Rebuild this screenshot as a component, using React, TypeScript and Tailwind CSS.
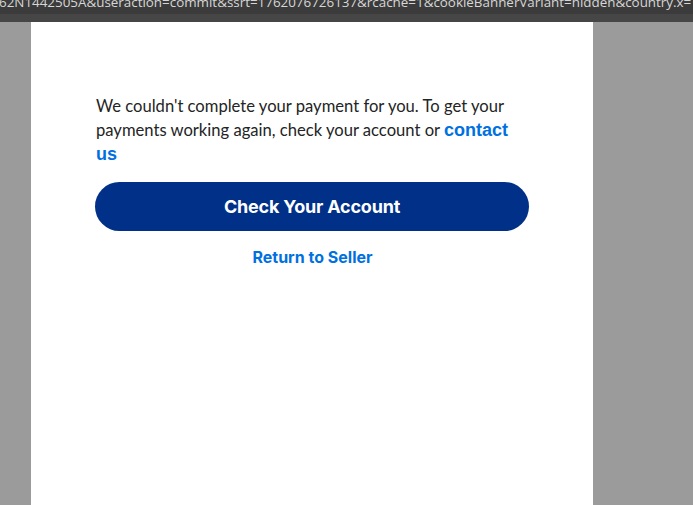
export default function App() {
  return (
    <div className="flex h-[505px] w-[693px] flex-col overflow-hidden bg-[#9b9b9b]">
      {/* browser url strip, clipped at the top */}
      <div className="h-[14px] overflow-hidden bg-[#3b3b3b]">
        <div className="-mt-[7px] -ml-[1px] whitespace-nowrap font-['Open_Sans',sans-serif] text-[13.4px] leading-[18px] text-[#d6d6d6]">
          62N1442505A&amp;useraction=commit&amp;ssrt=1762076726137&amp;rcache=1&amp;cookieBannerVariant=hidden&amp;country.x=
        </div>
      </div>
      <div className="h-[8px] bg-[#464646]" />

      <div className="flex flex-1 justify-start pl-[31px]">
        <div className="w-[562px] bg-white pr-[64px] pt-[72px] pl-[65px]">
          <p className="font-['Lato',sans-serif] text-[16.6px] leading-[24px] text-[#232425]">
            We couldn't complete your payment for you. To get your payments working again, check your account or{" "}
            <a
              href="#"
              className="font-['Liberation_Sans',Arial,sans-serif] text-[18px] font-bold text-[#0070e0]"
            >
              contact us
            </a>
          </p>

          <button className="mt-[16px] -ml-[1px] flex h-[49px] w-[434px] items-center justify-center rounded-full bg-[#003087] font-['Inter',sans-serif] text-[18px] font-bold tracking-[-0.2px] text-white">
            Check Your Account
          </button>

          <div className="mt-[14px] text-center">
            <a
              href="#"
              className="font-['Inter',sans-serif] text-[16px] font-bold text-[#0070e0]"
            >
              Return to Seller
            </a>
          </div>
        </div>
      </div>
    </div>
  );
}
